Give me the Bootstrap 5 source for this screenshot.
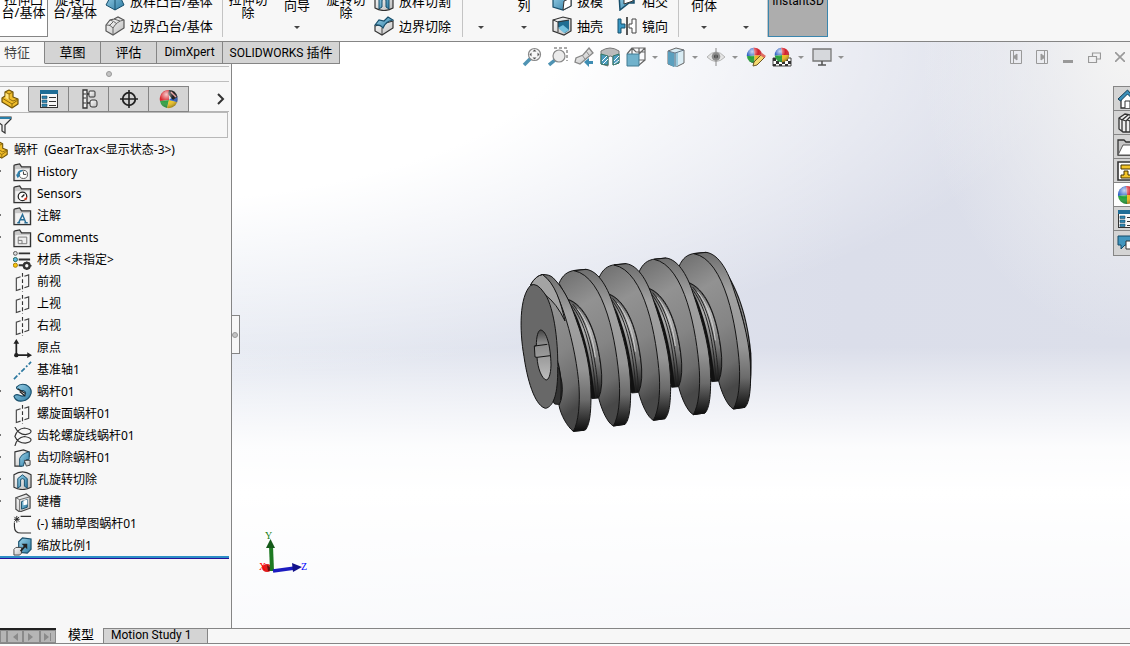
<!DOCTYPE html>
<html lang="zh-CN">
<head>
<meta charset="utf-8">
<meta name="viewport" content="width=device-width, initial-scale=1">
<title>蜗杆 - SOLIDWORKS</title>
<link href="https://cdn.jsdelivr.net/npm/bootstrap@5.3.0/dist/css/bootstrap.min.css" rel="stylesheet">
<style>
body{font-family:"Noto Sans","Noto Sans CJK SC",sans-serif;font-size:12px;line-height:16px;color:#000;background:#f7f7f7}
button{border:0;background:none;padding:0;color:inherit}
a{color:inherit;text-decoration:none}
svg{display:block;flex:none}
.ui-font{font-family:Roboto,"Noto Sans CJK SC",sans-serif}
.cjk{font-size:13px}
/* ribbon */
.ribbon{height:42px;border-bottom:1px solid #858585;background:#f7f7f7}
.rb{font-size:13px;line-height:13px;padding-bottom:18px;text-align:center;white-space:nowrap;position:relative}
.rb.one{padding-bottom:25px}
.rb.more{height:38px}
.rb .arrow{position:absolute;left:50%;bottom:8px;margin-left:-3px}
.rb.on{background:#fff;border-right:1px solid #858585;border-bottom:1px solid #858585;padding-bottom:17px}
.w34{width:34px}.w36{width:36px}.w48{width:48px}.w50{width:50px}.w54{width:54px}
.stack{padding:0 0 3px 3px}
.stack button{font-size:13px;height:25px;display:flex;align-items:center;gap:5px;white-space:nowrap}
.w120{width:120px}.w91{width:91px}.w65{width:65px}.w64{width:64px}
.sep{width:1px;height:60px;background:#c4c4c4}
.arrow{width:0;height:0;border:3px solid transparent;border-top-color:#444;border-bottom:0;flex:none}
.arrow.dim{border-top-color:#929292}
.instant{width:60px;height:62px;padding-bottom:10px;background:#adadad;border:1px solid #3a86ae;font-size:12px}
/* command tabs */
.work{background:
 linear-gradient(180deg,rgba(255,255,255,0) 52%,rgba(255,255,255,.45) 60%,rgba(255,255,255,.9) 69%,#fff 77%,rgba(255,255,255,.8) 100%),
 radial-gradient(ellipse 210px 300px at 100% 0,#f3f3f3 10%,rgba(243,243,243,0) 100%),
 radial-gradient(ellipse 980px 340px at 8% 0,#fff 48%,rgba(255,255,255,.5) 74%,rgba(255,255,255,0) 100%),
 linear-gradient(90deg,#e4e8f1 20%,#dbdeea 75%,#dcdfea)}
.top-row{height:22px}
.cmd a{display:block;height:22px;line-height:21px;text-align:center;border-right:1px solid #858585;border-bottom:1px solid #858585;background:#d4d4d4;white-space:nowrap}
.cmd a.on{background:#f7f7f7;width:45px;padding-right:10px;border-bottom-color:#f7f7f7;color:#444}
.t56{width:56px}.t66{width:66px}.t117{width:117px}
.hud{margin-left:182px;padding-top:5px}
.hud button{width:20px;height:20px;margin-right:6px}
.hud .drop{width:6px;margin-right:8px;display:grid;place-items:center}
.win button{width:26px;height:20px;display:grid;place-items:center}
.win{padding-top:5px;margin-right:-3px}
/* feature tree */
.side{width:232px;background:#f7f7f7;border-right:1px solid #858585;padding:2px 2px 0 0}
.grip{height:16px;border-top:1px solid #bdbdbd;border-bottom:1px solid #bdbdbd;display:grid;place-items:center;padding-right:11px}
.knob{width:6px;height:6px;border-radius:50%;background:#c4c4c4;border:1px solid #999}
.mgr{margin-top:4px;height:26px;border-bottom:1px solid #b5b5b5}
.mgr button{width:40px;height:26px;background:#d4d4d4;border:1px solid #858585;border-left:0;display:grid;place-items:center}
.mgr .on{width:29px;background:#f7f7f7;border-bottom-color:#f7f7f7;border-top-color:#bbb;padding-right:8px}
.filter{height:26px;border:1px solid #b8b8b8;border-left:0;margin-right:1px}
.filter input{border:0;background:none;outline:0;min-width:0}
.tree li{height:22px;display:flex;align-items:center;gap:5px;padding:2px 0 0 13px;white-space:pre;position:relative}
.tree li.root{padding-left:0}
.tree li.root svg{margin-left:-9px}
.tree li.exp::before{content:"";position:absolute;left:0;top:10px;width:1px;height:2px;background:#777}
.rollback{height:3px;background:#2d8fc6;border-bottom:1px solid #24129a}
.handle{position:absolute;left:0;top:251px;width:8px;height:39px;background:#f7f7f7;border:1px solid #858585;border-left:0;display:grid;place-items:center}
.handle .knob{margin-left:-2px}
.task{position:absolute;right:0;top:22px;width:17px;border:1px solid #858585;border-right:0}
.task button{display:flex;align-items:center;justify-content:flex-start;width:16px;height:24px;overflow:hidden;background:#d4d4d4;border-bottom:1px solid #858585;padding-left:3px}
.task button:last-child{border-bottom:0}
.task .on{background:#fff}
.worm{position:absolute;left:31%;top:176px}
.triad{position:absolute;left:26px;bottom:52px}
/* bottom tabs */
.sheet{height:18px;border-bottom:3px solid #fbfbfb}
.sheet>*{height:15px;line-height:14px;box-shadow:0 1px #858585}
.vcr{width:56px;border-top:2px solid #222;background:#a9a9a9}
.vcr button{flex:1 1 0;border:1px solid #8a8a8a;background:#b5b5b5;display:grid;place-items:center}
.vcr button:first-child{flex:0 0 7px}
.model-tab{width:47px;font-size:13px;text-align:center;padding-left:3px}
.motion{width:105px;background:#d4d4d4;border:1px solid #858585;border-bottom:0;padding-left:7px;line-height:13px}
.rest{border-top:1px solid #858585}
</style>
</head>
<body class="vh-100 d-flex flex-column overflow-hidden">
<svg width="0" height="0" class="position-absolute" aria-hidden="true">
<defs>
<linearGradient id="blu" x1="0" y1="0" x2="1" y2="1"><stop stop-color="#9cd3ea"/><stop offset="1" stop-color="#2d7ba3"/></linearGradient>
<linearGradient id="gry" x1="0" y1="0" x2="1" y2="1"><stop stop-color="#fff"/><stop offset="1" stop-color="#bbb"/></linearGradient>
<radialGradient id="shine" cx=".35" cy=".25" r=".8"><stop stop-color="#fff" stop-opacity=".75"/><stop offset=".5" stop-color="#fff" stop-opacity="0"/><stop offset="1" stop-color="#000" stop-opacity=".4"/></radialGradient>
<symbol id="ball" viewBox="0 0 20 20"><path d="M10 10L9 1A9 9 0 0 0 1 11Z" fill="#2a5fc4"/><path d="M10 10L9 1A9 9 0 0 1 19 10Z" fill="#d3212b"/><path d="M10 10L1 11A9 9 0 0 0 10 19Z" fill="#22a238"/><path d="M10 10L19 10A9 9 0 0 1 10 19Z" fill="#efb91d"/><circle cx="10" cy="10" r="9" fill="url(#shine)"/></symbol>
<symbol id="ball2" viewBox="0 0 20 20"><path d="M10 11L10 1A9 9 0 0 0 1 12Z" fill="#d8232a"/><path d="M10 11L1 12A9 9 0 0 0 8 19Z" fill="#2fa142"/><path d="M10 11L8 19A9 9 0 0 0 18 13Z" fill="#f2c61f"/><path d="M10 11L18 13A9 9 0 0 0 17 5Z" fill="#2a5fc4"/><path d="M10 1A9 9 0 0 1 18.500 8L14 11 9 5Z" fill="#1c1c1c"/><path d="M12 3l5 5" stroke="#e8a0a0" stroke-width="1.500"/><circle cx="10" cy="10" r="9" fill="url(#shine)"/></symbol>
<symbol id="part" viewBox="0 0 20 20"><path d="M2 9l3-2 0-4 4-2 4 2v5l5 2v5l-6 4-10-6z" fill="#f0bd2b" stroke="#6d5208" stroke-width="1.2" stroke-linejoin="round"/><path d="M5 3l4 2v5l4 2 5-2M9 5l4-2M2 9l10 6v4M12 15l6-4" fill="none" stroke="#8f6b0b"/><path d="M5.500 4l3 1.500v4.500l3 2-6-3z" fill="#ffe684"/></symbol>
<symbol id="list" viewBox="0 0 20 20"><rect x="1.500" y="1.500" width="17" height="17" fill="#f7f7f7" stroke="#333"/><path d="M1 1h18v4H1z" fill="#1f6d96"/><path d="M3 7h5v2.500H3zM3 11h5v2.500H3zM3 15h5v2.500H3z" fill="#2b86b3" stroke="#174b66" stroke-width=".6"/><path d="M10 8.500h7M10 12.500h7M10 16.500h7" stroke="#333"/></symbol>
<symbol id="config" viewBox="0 0 20 20"><path d="M4 1h4v18H4zM8 5h4M8 14h4" fill="#eee" stroke="#333" stroke-width="1.300"/><path d="M4 5h3M4 9h3M4 14h3" stroke="#333"/><rect x="10" y="2" width="6" height="6" rx="1" fill="url(#gry)" stroke="#333"/><rect x="11" y="11" width="7" height="7" rx="2" fill="url(#gry)" stroke="#333"/></symbol>
<symbol id="cross" viewBox="0 0 20 20"><circle cx="10" cy="10" r="6.300" fill="none" stroke="#222" stroke-width="1.800"/><path d="M10 1v18M1 10h18" stroke="#222" stroke-width="1.600"/></symbol>
<symbol id="folder" viewBox="0 0 20 20"><path d="M1 18.500V3q0-1 1-1l5-1 2 3h9.500v14.500z" fill="#c9c9c9" stroke="#333" stroke-width="1.300"/><path d="M2.500 6.500h14.500v11H2.500z" fill="#f2f2f2"/></symbol>
<symbol id="hist" viewBox="0 0 20 20"><use href="#folder"/><circle cx="11" cy="12" r="4.300" fill="#fff" stroke="#555"/><path d="M11 9v3h3" stroke="#333" fill="none"/><path d="M5 14q0-6 5-6" stroke="#2b7fac" stroke-width="2" fill="none"/><path d="M3 12h5l-3 4z" fill="#2b7fac"/></symbol>
<symbol id="sens" viewBox="0 0 20 20"><use href="#folder"/><circle cx="10" cy="12" r="4.500" fill="#fff" stroke="#222" stroke-width="1.300"/><path d="M9 13l3-3" stroke="#222" stroke-width="1.500"/><path d="M11 15l4-3-1 4z" fill="#e0341b"/></symbol>
<symbol id="anno" viewBox="0 0 20 20"><use href="#folder"/><path d="M6 16.500L10 8l3.500 8.500M8 13.500h4.500M4.500 16.500h3M12 16.500h3.500" fill="none" stroke="#286f98" stroke-width="1.500"/></symbol>
<symbol id="comm" viewBox="0 0 20 20"><use href="#folder"/><path d="M5.500 8.500h9v7h-9z" fill="#eee" stroke="#777"/><path d="M5.500 12h4v3.500" fill="none" stroke="#777"/></symbol>
<symbol id="mat" viewBox="0 0 20 20"><path d="M6 2.500h12M6 9h12M6 15h5" stroke="#333" stroke-width="2"/><circle cx="2.500" cy="2.500" r="2" fill="#ddd" stroke="#555"/><circle cx="2.500" cy="9" r="2.200" fill="#5db6e4" stroke="#265"/><circle cx="2.500" cy="15" r="2.200" fill="#f7c70f" stroke="#a67b05"/><circle cx="14.500" cy="15.500" r="3" fill="none" stroke="#333" stroke-width="2.500"/><path d="M14.500 11v2M14.500 18v2M10 15.500h2M17 15.500h2.500M11.500 12.500l1 1M16.500 17.500l1 1M17.500 12.500l-1 1M12.500 17.500l-1 1" stroke="#333" stroke-width="1.500"/></symbol>
<symbol id="plane" viewBox="0 0 20 20"><path d="M8 4L3.500 5.500v13L8 17M12 15.500l4.500-1.500V2L12 3.500" fill="none" stroke="#444" stroke-width="1.200"/><path d="M10 0v20" stroke="#333" stroke-width="1.200" stroke-dasharray="4 2.500"/></symbol>
<symbol id="origin" viewBox="0 0 20 20"><path d="M3.500 4v13H16" fill="none" stroke="#222" stroke-width="1.800"/><path d="M3.500 0l3 5h-6zM20 17l-5-3v6z" fill="#222"/><circle cx="3.500" cy="17" r="2.300" fill="#222"/></symbol>
<symbol id="axis" viewBox="0 0 20 20"><path d="M1 19L19 1" stroke="#2d79a0" stroke-width="1.800" stroke-dasharray="5 2 2 2"/></symbol>
<symbol id="helix" viewBox="0 0 20 20"><path d="M4 4q4-4 10-2 6 3 5 9-2 7-9 8-7 1-9-5 2-3 6-1 4 2 6-1 1-3-2-4-3 0-5-1-3-1-2-3z" fill="url(#blu)" stroke="#174e6b" stroke-width="1.200"/><path d="M5 6l8 5M7 9l6 5" stroke="#222" stroke-width="1.300"/></symbol>
<symbol id="spiral" viewBox="0 0 20 20"><path d="M2 0Q6 8 13 8q6-1 6-3.500T12 1Q4 2 2 10q3 7 11 7 6-1 6-3.500T12 10Q4 11 2 20" fill="none" stroke="#333" stroke-width="1.200"/></symbol>
<symbol id="cutsw" viewBox="0 0 20 20"><path d="M2 3l9-2 6 2v5l-8 10-7 0z" fill="url(#gry)" stroke="#333" stroke-width="1.200"/><path d="M7 18V10q2-5 10-7v8q-5-1-6 7z" fill="url(#blu)" stroke="#1b506d"/><path d="M12 12h6v5l-4 1z" fill="url(#gry)" stroke="#444"/></symbol>
<symbol id="revcut" viewBox="0 0 20 20"><path d="M1 4q9-6 18 0v13q-9 5-18 0z" fill="url(#gry)" stroke="#333" stroke-width="1.200"/><path d="M5 8l5-4 5 4v10l-3-2V9l-2-1-2 1v7l-3 2z" fill="url(#blu)" stroke="#174e6b"/></symbol>
<symbol id="slot" viewBox="0 0 20 20"><path d="M3 5l11-4 4 3v12l-11 4-4-3z" fill="url(#gry)" stroke="#444" stroke-width="1.200"/><path d="M3 5l4 2 11-3M7 7v12" fill="none" stroke="#666"/><path d="M9 9l6-2v8l-6 2z" fill="url(#blu)" stroke="#174e6b"/><path d="M11 8v5l4-1V7z" fill="#fff"/></symbol>
<symbol id="sketch" viewBox="0 0 20 20"><path d="M8 1.500h11M1.500 8v4q0 7 7 7H19" fill="none" stroke="#333" stroke-width="1.200"/><path d="M4 1v7M1 4.500h6M1.500 2l5 5M6.500 2l-5 5" stroke="#222"/></symbol>
<symbol id="scale" viewBox="0 0 20 20"><path d="M6 5l4-4 9 1v11l-4 4-9-1z" fill="url(#blu)" stroke="#174e6b" stroke-width="1.200"/><path d="M1 13l2-2h6v6l-2 2H1z" fill="url(#gry)" stroke="#444"/><path d="M8 15l5-6" stroke="#222" stroke-width="2"/><path d="M9 7h6v6z" fill="#222"/></symbol>
<symbol id="loft" viewBox="0 0 20 20"><path d="M8 1h5l6 13-9 5-9-5z" fill="url(#blu)" stroke="#174e6b"/><path d="M10 1v18" stroke="#174e6b"/></symbol>
<symbol id="bound" viewBox="0 0 20 20"><path d="M1 9l4-5 4-1 4-2 6 3v8l-11 7-7-4z" fill="url(#gry)" stroke="#555" stroke-width="1.200"/><path d="M1 9q4-1 7 3 4-7 11-8M8 12v7M5 4q4 1 7 4M9 3q3 1 6 2M4 10l4-4" fill="none" stroke="#666"/></symbol>
<symbol id="boundcut" viewBox="0 0 20 20"><path d="M1 10l18-5v7l-11 7-7-4z" fill="url(#gry)" stroke="#333" stroke-width="1.200"/><path d="M1 9l4-5 5 1 4-4 5 3q-7 1-10 8-3-4-8-3z" fill="url(#blu)" stroke="#174e6b" stroke-width="1.200"/><path d="M8 12v6" stroke="#444"/></symbol>
<symbol id="draft" viewBox="0 0 20 20"><path d="M1 7l8-4 10 2v10l-8 4-10-3z" fill="url(#blu)" stroke="#174e6b" stroke-width="1.200"/><path d="M12 10l7-3v8l-8 4z" fill="#fff" stroke="#333"/></symbol>
<symbol id="shell" viewBox="0 0 20 20"><path d="M1 4l10-3 8 2v12l-7 4-11-4z" fill="url(#gry)" stroke="#333" stroke-width="1.200"/><path d="M6 5l11-1v10l-4 3-7-6z" fill="#1f6d92"/><path d="M6 12l5-3 6 5-5 3z" fill="#76c1de"/><path d="M1 4l5 2v10M6 6l11-2" fill="none" stroke="#333"/></symbol>
<symbol id="inter" viewBox="0 0 20 20"><path d="M2 3h15v9h-5l-9 7z" fill="url(#blu)" stroke="#174e6b" stroke-width="1.500"/><path d="M7 7l9-4v7l-9 3z" fill="#fff" stroke="#333"/></symbol>
<symbol id="mirror" viewBox="0 0 20 20"><path d="M1 3h3v5h4v4H4v5H1z" fill="#3797c4" stroke="#174e6b"/><path d="M10 1v18" stroke="#222" stroke-width="1.500"/><path d="M19 3h-4v5h-3v4h3v5h4z" fill="#fff" stroke="#444"/></symbol>
<symbol id="zoomfit" viewBox="0 0 20 20"><path d="M2 18l7-7" stroke="#4f93b3" stroke-width="3.500"/><circle cx="12.500" cy="7.500" r="6" fill="#f7f7f7" stroke="#888" stroke-width="1.200"/><path d="M12.500 2.500l2 2h-4zM12.500 12.500l2-2h-4zM7.500 7.500l2-2v4zM17.500 7.500l-2-2v4z" fill="#555"/></symbol>
<symbol id="zoomarea" viewBox="0 0 20 20"><path d="M6 1h13v13" fill="none" stroke="#555" stroke-dasharray="3 2"/><path d="M1 18l6-5" stroke="#4f93b3" stroke-width="3.500"/><circle cx="11" cy="9" r="6" fill="#ebebeb" stroke="#888" stroke-width="1.200"/></symbol>
<symbol id="prev" viewBox="0 0 20 20"><path d="M15 1l4 5-6 5-7 6-5-2 1-4 7-3z" fill="url(#gry)" stroke="#888" stroke-width="1.300"/><path d="M12 4l3 4M8 8l3 4" stroke="#888"/><path d="M10 15l5-4v3h4v3h-4v3z" fill="#3e8db3"/></symbol>
<symbol id="section" viewBox="0 0 20 20"><path d="M1 4q9-6 18 0v12l-6 2v-8q-3-2-5 0v9l-7-2z" fill="#bcbcbc" stroke="#777"/><path d="M1 7l7 2v9l-7-1zM13 9l6-2v9l-6 2z" fill="#4a9abf" stroke="#376"/><path d="M2 14l5-5M3 17l5-5M14 14l5-5M14 17l5-4" stroke="#fff"/></symbol>
<symbol id="orient" viewBox="0 0 20 20"><path d="M6 7V1h13v12h-6M6 1l4 4h9M13 7V1M1 7l5-6M13 18l6-5M13 7l6-6" fill="none" stroke="#666" stroke-width="1.200"/><path d="M1 7h12v12H1z" fill="#71b2cc" stroke="#437b92"/></symbol>
<symbol id="style3" viewBox="0 0 20 20"><path d="M2 4l8-3 8 2v13l-8 4-8-3z" fill="#d9ecf4" stroke="#666"/><path d="M2 4l6 2v14l-6-3z" fill="#5a9fbe"/><path d="M8 6l4-1v14l-4 1z" fill="#9ccadd"/><path d="M2 4l7 2 9-3M9 6v13" fill="none" stroke="#678"/></symbol>
<symbol id="eye" viewBox="0 0 20 20"><path d="M1 10q9-10 18 0-9 9-18 0z" fill="#e4e4e4" stroke="#b5b5b5"/><circle cx="10" cy="9.500" r="4.300" fill="#8d8d8d"/><circle cx="10" cy="9.500" r="2" fill="#444"/><path d="M10 1v18" stroke="#888"/></symbol>
<symbol id="appear" viewBox="0 0 20 20"><use href="#ball" width="17" height="17"/><path d="M7 19l1-4 8-8 3 3-8 8z" fill="#f5d96f" stroke="#6b5628"/><path d="M14 8l2-2 4 3-2 2z" fill="#df6c5f"/></symbol>
<symbol id="scene" viewBox="0 0 20 20"><path d="M1 11h18v8H1z" fill="#fff" stroke="#444"/><path d="M1 11h3v3H1zM4 14h3v3H4zM1 17h3v2H1zM7 17h3v2H7zM10 14h3v3h-3zM13 17h3v2h-3zM16 14h3v3h-3zM14 11h2v3h-2z" fill="#333"/><use href="#ball" x="2" width="16" height="16"/></symbol>
<symbol id="monitor" viewBox="0 0 20 20"><path d="M1 2h18v12H1z" fill="#d6d8dc" stroke="#777" stroke-width="1.300"/><path d="M10 14v4M6 18h8" stroke="#555" stroke-width="1.600"/></symbol>
<symbol id="home" viewBox="0 0 20 20"><path d="M4 9v10h13V9l-6-6z" fill="#fff" stroke="#333" stroke-width="1.300"/><path d="M8 19v-7h5v7" fill="#fff" stroke="#333"/><path d="M1 10L10.500 1l8 9-2 1-6-6-7 7z" fill="#3a8fb9" stroke="#133f58"/></symbol>
<symbol id="books" viewBox="0 0 20 20"><path d="M2 5l6-4 10 2v12l-4 4-8 0-4-3z" fill="#eee" stroke="#333" stroke-width="1.300"/><path d="M2 5l3 2v11M5 7l6-5M9 19V8l5-5M9 8l-3-1M13 19V8l5-5M13 8l-3-1" fill="none" stroke="#333" stroke-width="1.300"/></symbol>
<symbol id="openf" viewBox="0 0 20 20"><path d="M1 18V3h6l2 2h10v13z" fill="#c7c7c7" stroke="#333" stroke-width="1.300"/><path d="M1 18L6 8h14v10z" fill="#fff" stroke="#555"/></symbol>
<symbol id="palette" viewBox="0 0 20 20"><path d="M1 1h19v18H1z" fill="#fff" stroke="#333" stroke-width="1.600"/><path d="M4 4h10v4H4zM7 10h4v4h3v3H4v-3h3z" fill="#f5c62b" stroke="#443300"/></symbol>
<symbol id="chat" viewBox="0 0 20 20"><path d="M1 3h14v9H8l-4 4v-4H1z" fill="#4196bf" stroke="#154a68"/><path d="M9 8h11v8h-11z" fill="#fff" stroke="#333"/></symbol>
</defs></svg>

<header class="ribbon d-flex align-items-end overflow-hidden flex-shrink-0">
 <div class="d-flex align-items-end">
  <button class="rb on w48 mb-1">拉伸凸<br>台/基体</button>
  <button class="rb w54 mb-1">旋转凸<br>台/基体</button>
  <div class="stack w120"><button><svg width="20" height="20"><use href="#loft"/></svg>放样凸台/基体</button><button><svg width="20" height="20"><use href="#bound"/></svg>边界凸台/基体</button></div>
  <div class="sep mb-1"></div>
  <button class="rb w50 mb-1">拉伸切<br>除</button>
  <button class="rb w48 mb-1 one">向导<i class="arrow"></i></button>
  <button class="rb w50 mb-1">旋转切<br>除</button>
  <div class="stack w91"><button><svg width="20" height="20"><use href="#revcut"/></svg>放样切割</button><button><svg width="20" height="20"><use href="#boundcut"/></svg>边界切除</button></div>
  <div class="sep mb-1"></div>
  <button class="rb w36 mb-1 more" aria-label="阵列选项"><i class="arrow"></i></button>
  <button class="rb w50 mb-1 one">列<i class="arrow"></i></button>
  <div class="stack w65"><button><svg width="20" height="20"><use href="#draft"/></svg>拔模</button><button><svg width="20" height="20"><use href="#shell"/></svg>抽壳</button></div>
  <div class="stack w64"><button><svg width="20" height="20"><use href="#inter"/></svg>相交</button><button><svg width="20" height="20"><use href="#mirror"/></svg>镜向</button></div>
  <div class="sep mb-1"></div>
  <button class="rb w50 mb-1 one">何体<i class="arrow"></i></button>
  <button class="rb w34 mb-1 more" aria-label="曲线选项"><i class="arrow"></i></button>
  <div class="sep mb-1 ms-1"></div>
  <button class="instant ui-font mb-1">Instant3D</button>
 </div>
</header>

<main class="work flex-grow-1 d-flex flex-column" style="min-height:0">
 <div class="top-row d-flex align-items-start flex-shrink-0">
  <nav class="cmd ui-font d-flex flex-shrink-0"><a href="#" class="on cjk">特征</a><a href="#" class="t56 cjk">草图</a><a href="#" class="t56 cjk">评估</a><a href="#" class="t66">DimXpert</a><a href="#" class="t117">SOLIDWORKS <span class="cjk">插件</span></a></nav>
  <div class="hud d-flex">
   <button aria-label="整屏显示"><svg width="20" height="20"><use href="#zoomfit"/></svg></button>
   <button aria-label="局部放大"><svg width="20" height="20"><use href="#zoomarea"/></svg></button>
   <button aria-label="上一视图"><svg width="20" height="20"><use href="#prev"/></svg></button>
   <button aria-label="剖面视图"><svg width="20" height="20"><use href="#section"/></svg></button>
   <button aria-label="视图定向"><svg width="20" height="20"><use href="#orient"/></svg></button><button class="drop" aria-label="更多"><i class="arrow dim"></i></button>
   <button aria-label="显示样式"><svg width="20" height="20"><use href="#style3"/></svg></button><button class="drop" aria-label="更多"><i class="arrow dim"></i></button>
   <button aria-label="隐藏/显示"><svg width="20" height="20"><use href="#eye"/></svg></button><button class="drop" aria-label="更多"><i class="arrow dim"></i></button>
   <button aria-label="编辑外观"><svg width="20" height="20"><use href="#appear"/></svg></button>
   <button aria-label="应用布景"><svg width="20" height="20"><use href="#scene"/></svg></button><button class="drop" aria-label="更多"><i class="arrow dim"></i></button>
   <button aria-label="视图设定"><svg width="20" height="20"><use href="#monitor"/></svg></button><button class="drop" aria-label="更多"><i class="arrow dim"></i></button>
  </div>
  <div class="win d-flex ms-auto flex-shrink-0">
   <button aria-label="左"><svg width="12" height="14" fill="none" stroke="#999"><path d="M.5.5h11v13H.5zM3.500 1v12"/><path d="M7 4v6L3 7z" fill="#999"/></svg></button>
   <button aria-label="右"><svg width="12" height="14" fill="none" stroke="#999"><path d="M.5.5h11v13H.5zM8.500 1v12"/><path d="M5 4v6l4-3z" fill="#999"/></svg></button>
   <button aria-label="最小化"><svg width="10" height="14"><path d="M0 10h10v3H0z" fill="#999"/></svg></button>
   <button aria-label="还原"><svg width="13" height="11" fill="none" stroke="#999" stroke-width="1.200"><path d="M.5 4.500h8v6h-8zM4.500 4V1h8v6H9"/></svg></button>
   <button aria-label="关闭"><svg width="10" height="10" stroke="#999" stroke-width="1.600"><path d="M0 0l10 10M10 0L0 10"/></svg></button>
  </div>
 </div>

 <div class="d-flex flex-grow-1" style="min-height:0">
  <aside class="side flex-shrink-0">
   <div class="grip"><span class="knob"></span></div>
   <div class="mgr d-flex">
    <button class="on" aria-label="特征树"><svg width="20" height="20"><use href="#part"/></svg></button>
    <button aria-label="属性"><svg width="20" height="20"><use href="#list"/></svg></button>
    <button aria-label="配置"><svg width="20" height="20"><use href="#config"/></svg></button>
    <button aria-label="尺寸专家"><svg width="20" height="20"><use href="#cross"/></svg></button>
    <button aria-label="外观"><svg width="20" height="20"><use href="#ball2"/></svg></button>
    <span class="ms-auto me-1 d-flex align-items-center"><svg width="8" height="12"><path d="M1 1l5 5-5 5" fill="none" stroke="#333" stroke-width="2"/></svg></span>
   </div>
   <div class="filter d-flex align-items-center"><svg width="12" height="18"><path d="M-6 1h17v2l-6 6v8l-3-2V9l-8-6z" fill="#eee" stroke="#333" stroke-width="1.200"/><path d="M0 1h11v2H0z" fill="#2b7fa8"/></svg><input class="flex-grow-1" aria-label="过滤"></div>
   <ul class="tree list-unstyled m-0">
    <li class="root"><svg width="18" height="18"><use href="#part"/></svg>蜗杆  (GearTrax&lt;显示状态-3&gt;)</li>
    <li class="exp"><svg width="19" height="19"><use href="#hist"/></svg>History</li>
    <li><svg width="19" height="19"><use href="#sens"/></svg>Sensors</li>
    <li class="exp"><svg width="19" height="19"><use href="#anno"/></svg>注解</li>
    <li class="exp"><svg width="19" height="19"><use href="#comm"/></svg>Comments</li>
    <li><svg width="19" height="19"><use href="#mat"/></svg>材质 &lt;未指定&gt;</li>
    <li><svg width="19" height="19"><use href="#plane"/></svg>前视</li>
    <li><svg width="19" height="19"><use href="#plane"/></svg>上视</li>
    <li><svg width="19" height="19"><use href="#plane"/></svg>右视</li>
    <li><svg width="19" height="19"><use href="#origin"/></svg>原点</li>
    <li><svg width="19" height="19"><use href="#axis"/></svg>基准轴1</li>
    <li class="exp"><svg width="19" height="19"><use href="#helix"/></svg>蜗杆01</li>
    <li><svg width="19" height="19"><use href="#plane"/></svg>螺旋面蜗杆01</li>
    <li class="exp"><svg width="19" height="19"><use href="#spiral"/></svg>齿轮螺旋线蜗杆01</li>
    <li class="exp"><svg width="19" height="19"><use href="#cutsw"/></svg>齿切除蜗杆01</li>
    <li class="exp"><svg width="19" height="19"><use href="#revcut"/></svg>孔旋转切除</li>
    <li class="exp"><svg width="19" height="19"><use href="#slot"/></svg>键槽</li>
    <li><svg width="19" height="19"><use href="#sketch"/></svg>(-) 辅助草图蜗杆01</li>
    <li><svg width="19" height="19"><use href="#scale"/></svg>缩放比例1</li>
   </ul>
   <div class="rollback"></div>
  </aside>

  <section class="flex-grow-1 position-relative">
   <div class="handle"><span class="knob"></span></div>
   <svg class="worm" width="250" height="200" viewBox="0 0 750 600" role="img" aria-label="蜗杆模型">
    <defs>
     <linearGradient id="flank" x1="0" y1="0" x2=".25" y2="1"><stop stop-color="#6c6c6c"/><stop offset=".3" stop-color="#929292"/><stop offset=".6" stop-color="#858585"/><stop offset=".85" stop-color="#6c6c6c"/><stop offset="1" stop-color="#484848"/></linearGradient>
     <linearGradient id="crest" x1="0" y1="0" x2="0" y2="1"><stop stop-color="#6e6e6e"/><stop offset=".25" stop-color="#a2a2a2"/><stop offset=".6" stop-color="#969696"/><stop offset=".8" stop-color="#6b6b6b"/><stop offset="1" stop-color="#0d0d0d"/></linearGradient>
     <linearGradient id="root" x1="0" y1="0" x2="0" y2="1"><stop stop-color="#555"/><stop offset=".3" stop-color="#b4b4b4"/><stop offset=".65" stop-color="#777"/><stop offset="1" stop-color="#111"/></linearGradient>
     <linearGradient id="hole" x1="0" y1="0" x2="0" y2="1"><stop stop-color="#444"/><stop offset=".25" stop-color="#888"/><stop offset="1" stop-color="#bcbcbc"/></linearGradient>
     <g id="gully" stroke-linejoin="round">
      <path d="M174 178C220 196 252 260 268 350Q281 420 278 460L266 474 245 476 225 330Z" fill="url(#root)" stroke="#111" stroke-width="2.500"/>
      <path d="M176 190C205 225 238 310 255 474L244 474 225 350Z" fill="#111"/>
      <path d="M184 196C222 240 250 330 258 474M188 192C235 245 258 350 266 468" fill="none" stroke="#222" stroke-width="3"/>
      <path d="M202 206C232 240 250 300 256 352" fill="none" stroke="#d0d0d0" stroke-width="3"/>
     </g>
     <g id="thread" stroke="#141414" stroke-width="3" stroke-linejoin="round">
      <path d="M147 130C158 105 172 94 195 91L228 88C300 180 345 330 345 553L310 558C292 548 275 510 266 474Q281 440 272 372C258 270 225 195 174 178Z" fill="url(#flank)"/>
      <path d="M192 92L228 88C262 92 290 135 308 190C342 290 362 370 362 450C362 510 357 540 345 553L310 558C326 530 331 480 328 425C320 310 285 110 192 92Z" fill="url(#crest)"/>
     </g>
    </defs>
    <path d="M625 70C670 110 712 210 724 340Q728 430 712 480L680 400Z" fill="#151515"/>
    <path d="M650 110C690 170 712 260 716 330" fill="none" stroke="#888" stroke-width="4"/>
    <use href="#gully" x="360" y="-51"/><use href="#thread" x="360" y="-51"/>
    <use href="#gully" x="240" y="-34"/><use href="#thread" x="240" y="-34"/>
    <use href="#gully" x="120" y="-17"/><use href="#thread" x="120" y="-17"/>
    <use href="#gully"/><use href="#thread"/>
    <g stroke="#141414" stroke-width="3" stroke-linejoin="round">
     <path d="M130 370L162 400 156 494 134 492 120 470Z" fill="#333"/>
     <path d="M62 134Q78 106 98 104L120 112C170 200 205 300 222 571L190 574C172 560 152 525 147 496Q160 470 156 430L130 300Z" fill="url(#flank)"/>
     <path d="M94 104Q118 102 130 114C160 145 178 180 196 232C228 320 243 390 243 465C243 525 238 555 226 570L190 574C206 545 210 490 207 440C200 330 150 130 94 104Z" fill="url(#crest)"/>
     <path d="M62 134Q78 106 98 104C135 130 152 185 165 243Q140 190 106 165Q85 135 62 134Z" fill="#a3a3a3"/>
     <path d="M62 136C28 170 28 270 42 350C55 440 80 500 107 505C128 500 142 470 143 400C146 290 128 190 102 158Q80 126 62 136Z" fill="#686868"/>
     <path d="M92 270C110 272 122 320 123 375C122 405 116 420 108 420C95 415 83 385 81 352L75 351 73 318 79 317C79 290 84 271 92 270Z" fill="url(#hole)"/>
     <path d="M74 318l38-5M81 352l40-5" fill="none"/>
     <path d="M145 370Q157 420 152 480" fill="none"/>
    </g>
   </svg>
   <svg class="triad" width="52" height="44" viewBox="0 0 52 44" font-family="Liberation Serif, serif" font-size="10">
    <ellipse cx="9" cy="36" rx="5" ry="4" fill="#e21d1d"/><path d="M9 33l6 5-5 1z" fill="#611"/>
    <path d="M11 14h4l1 25h-4z" fill="#1e7a22"/><path d="M12.500 7l4.500 9H8z" fill="#155a1a"/>
    <path d="M15 39l22-3" stroke="#1c1cc0" stroke-width="3.500"/><path d="M34 31l10 4-9 5z" fill="#12128a"/>
    <text x="7" y="7" fill="#168016">Y</text><text x="1" y="38" fill="#f00">X</text><text x="43" y="38" fill="#00f">Z</text>
   </svg>
   <div class="task">
    <button aria-label="主页"><svg width="20" height="20"><use href="#home"/></svg></button>
    <button aria-label="设计库"><svg width="20" height="20"><use href="#books"/></svg></button>
    <button aria-label="文件探索器"><svg width="20" height="20"><use href="#openf"/></svg></button>
    <button aria-label="视图调色板"><svg width="20" height="20"><use href="#palette"/></svg></button>
    <button class="on" aria-label="外观"><svg width="20" height="20"><use href="#ball"/></svg></button>
    <button aria-label="自定义属性"><svg width="20" height="20"><use href="#list"/></svg></button>
    <button aria-label="论坛"><svg width="20" height="20"><use href="#chat"/></svg></button>
   </div>
  </section>
 </div>
</main>

<footer class="sheet ui-font d-flex flex-shrink-0">
 <div class="vcr d-flex">
  <button aria-label="首页"></button>
  <button aria-label="上一页"><svg width="6" height="8"><path d="M6 0v8L1 4z" fill="#8a8a8a"/></svg></button>
  <button aria-label="下一页"><svg width="6" height="8"><path d="M0 0v8l5-4z" fill="#8a8a8a"/></svg></button>
  <button aria-label="末页"><svg width="8" height="8"><path d="M0 0v8l5-4zM6 0h1v8H6z" fill="#8a8a8a"/></svg></button>
 </div>
 <a href="#" class="model-tab">模型</a>
 <a href="#" class="motion">Motion Study 1</a>
 <div class="rest flex-grow-1"></div>
</footer>
<script src="https://cdn.jsdelivr.net/npm/bootstrap@5.3.0/dist/js/bootstrap.bundle.min.js"></script>
</body>
</html>
